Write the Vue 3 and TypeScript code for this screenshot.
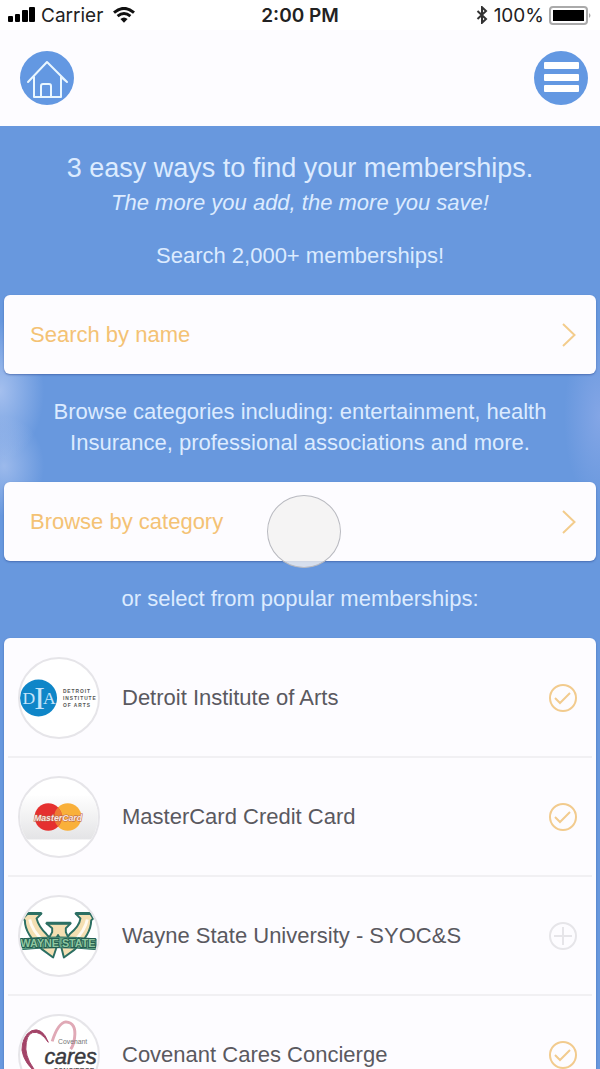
<script setup lang="ts">
import { ref } from 'vue'

type Logo = 'dia' | 'mastercard' | 'wayne' | 'covenant'

interface Membership {
  id: Logo
  name: string
  added: boolean
}

const memberships = ref<Membership[]>([
  { id: 'dia', name: 'Detroit Institute of Arts', added: true },
  { id: 'mastercard', name: 'MasterCard Credit Card', added: true },
  { id: 'wayne', name: 'Wayne State University - SYOC&S', added: false },
  { id: 'covenant', name: 'Covenant Cares Concierge', added: true },
])

function toggle(item: Membership): void {
  item.added = !item.added
}
</script>

<template>
  <div class="screen">
    <div class="status">
      <div class="status-side">
        <svg class="signal" viewBox="0 0 27 16" aria-hidden="true">
          <rect x="0" y="9" width="5" height="6" rx="1" />
          <rect x="7" y="7" width="5" height="8" rx="1" />
          <rect x="14" y="3" width="6" height="12" rx="1" />
          <rect x="21" y="0" width="6" height="15" rx="1" />
        </svg>
        <span class="carrier">Carrier</span>
        <svg class="wifi" viewBox="0 0 22 16" aria-hidden="true">
          <path d="M1 5.6Q11 -2.8 21 5.6" />
          <path d="M4.6 9.2Q11 3.8 17.4 9.2" />
          <path class="dot" d="M7.4 12Q11 9 14.6 12L11 15.8Z" />
        </svg>
      </div>
      <span class="time">2:00 PM</span>
      <div class="status-side end">
        <svg class="bluetooth" viewBox="0 0 12 18" aria-hidden="true">
          <path d="M1.5 5L10 13L6 16.8V1.2L10 5L1.5 13" />
        </svg>
        <span class="percent">100%</span>
        <svg class="battery" viewBox="0 0 43 19" aria-hidden="true">
          <rect class="shell" x="1" y="1" width="37" height="17" rx="3" />
          <rect x="4" y="4" width="31" height="11" />
          <path class="tip" d="M40 7Q43 9.5 40 12Z" />
        </svg>
      </div>
    </div>

    <header class="bar">
      <button class="round" type="button" aria-label="Home">
        <svg viewBox="0 0 54 54" aria-hidden="true">
          <path class="line" d="M8 31L27 11L47 31L41 26V46H14V26" />
          <path class="line" d="M21 46V35Q21 33 23 33H29Q31 33 31 35V46" />
        </svg>
      </button>
      <button class="round" type="button" aria-label="Menu">
        <svg viewBox="0 0 54 54" aria-hidden="true">
          <rect class="menu-line" x="10" y="11" width="35" height="7" rx="1" />
          <rect class="menu-line" x="10" y="23" width="35" height="7" rx="1" />
          <rect class="menu-line" x="10" y="34" width="35" height="7" rx="1" />
        </svg>
      </button>
    </header>

    <main class="content">
      <h1 class="title">3 easy ways to find your memberships.</h1>
      <p class="tagline">The more you add, the more you save!</p>
      <p class="note">Search 2,000+ memberships!</p>

      <a class="card link" href="#search">
        <span>Search by name</span>
        <svg class="chevron" viewBox="0 0 14 26" aria-hidden="true"><path d="M1 2L12.5 13L1 24" /></svg>
      </a>

      <p class="note">
        Browse categories including: entertainment, health<br />Insurance, professional associations and more.
      </p>

      <a class="card link" href="#browse">
        <span>Browse by category</span>
        <svg class="chevron" viewBox="0 0 14 26" aria-hidden="true"><path d="M1 2L12.5 13L1 24" /></svg>
        <span class="touch"></span>
      </a>

      <p class="note">or select from popular memberships:</p>

      <ul class="card list">
        <li v-for="item in memberships" :key="item.id" class="row">
          <span class="avatar">
            <svg v-if="item.id === 'dia'" viewBox="0 0 80 80" aria-hidden="true">
              <circle cx="19" cy="40" r="19" fill="#0f86c8" />
              <g fill="#c5e4fa" font-family="'Liberation Serif', serif" text-anchor="middle">
                <text x="9" y="46" font-size="18">D</text>
                <text x="20" y="51" font-size="33">I</text>
                <text x="30" y="46" font-size="18">A</text>
              </g>
              <g fill="#555" font-family="'Liberation Sans', sans-serif" font-weight="700" font-size="5" letter-spacing="1">
                <text x="44" y="35">DETROIT</text>
                <text x="44" y="42">INSTITUTE</text>
                <text x="44" y="49">OF ARTS</text>
              </g>
            </svg>
            <svg v-else-if="item.id === 'mastercard'" viewBox="0 0 80 80" aria-hidden="true">
              <defs>
                <linearGradient id="mc-shade" x1="0" y1="0" x2="0" y2="1">
                  <stop offset="0" stop-color="#fefefe" />
                  <stop offset="1" stop-color="#e4e4e6" />
                </linearGradient>
              </defs>
              <rect y="18" width="80" height="45" fill="url(#mc-shade)" />
              <circle cx="49" cy="40" r="14" fill="#f9b03a" />
              <circle cx="29" cy="40" r="14" fill="#e5302f" />
              <path d="M39 30.2A14 14 0 0 1 39 49.8A14 14 0 0 1 39 30.2Z" fill="#ee7b34" />
              <text x="39" y="44" text-anchor="middle" font-family="'Liberation Sans', sans-serif" font-size="9" font-weight="700" font-style="italic" fill="#fbe9e0" stroke="#b5604a" stroke-width="1" paint-order="stroke">MasterCard</text>
            </svg>
            <svg v-else-if="item.id === 'wayne'" viewBox="0 0 80 80" aria-hidden="true">
              <g fill="#f4dfb2" stroke="#2c6f63" stroke-width="2" stroke-linejoin="round">
                <path d="M8 17H22L17 22Q19 30 27 38L38 50L34 62L23 54Q5 38 5 24L3 22Z" />
                <path d="M72 17H57L62 22Q61 30 51 38L42 50L45 62L56 54Q73 38 73 24L75 22Z" />
                <path d="M27 27H52L47 32V36L52 47H43L39 39L35 47H27L33 36V32Z" />
              </g>
              <path d="M7 17H22M57 17H73M27 27H52" fill="none" stroke="#2c6f63" stroke-width="3" />
              <path d="M10 23Q12 34 24 45M69 23Q67 34 55 46" fill="none" stroke="#fffaf0" stroke-width="3" />
              <path d="M1 43Q40 39 78 43V54Q40 50 1 54Z" fill="#67a486" stroke="#2c6f63" />
              <text x="39" y="51" text-anchor="middle" font-family="'Liberation Sans', sans-serif" font-size="11" font-weight="700" fill="#8fc7a0" stroke="#245d50" stroke-width="2" paint-order="stroke">WAYNE STATE</text>
            </svg>
            <svg v-else viewBox="0 0 80 80" aria-hidden="true">
              <path d="M29 27Q23 11 12 15Q2 20 2 35Q4 49 19 60Q7 47 6 34Q6 19 13 17Q21 15 29 27Z" fill="#a34468" stroke="#a34468" />
              <path d="M33 26Q39 7 47 6Q58 7 56 22Q55 30 52 34" fill="none" stroke="#e0a9b6" stroke-width="3" />
              <text x="39" y="29" font-family="'Liberation Sans Narrow', 'Liberation Sans', sans-serif" font-size="7" fill="#777">Covenant</text>
              <text x="25" y="49" font-family="'Liberation Sans', sans-serif" font-size="22" font-style="italic" font-weight="400" fill="#3a3a3e" stroke="#3a3a3e" stroke-width="0.5">cares</text>
              <text x="34" y="58" font-family="'Liberation Sans', sans-serif" font-size="7" font-weight="700" fill="#555">CONCIERGE</text>
            </svg>
          </span>
          <span class="name">{{ item.name }}</span>
          <button
            class="toggle"
            :class="{ added: item.added }"
            type="button"
            :aria-pressed="item.added"
            :aria-label="(item.added ? 'Remove ' : 'Add ') + item.name"
            @click="toggle(item)"
          >
            <svg viewBox="0 0 30 30" aria-hidden="true">
              <circle cx="15" cy="15" r="13" />
              <path v-if="item.added" d="M7 15L12 20L22 10" />
              <path v-else d="M15 6V24M6 15H24" />
            </svg>
          </button>
        </li>
      </ul>
    </main>
  </div>
</template>

<style>
html,
body {
  margin: 0;
  background: #6898de;
}
</style>

<style scoped>
.screen {
  display: flex;
  flex-direction: column;
  height: 100vh;
  overflow: hidden;
  background: #fdfcff;
  font-family: 'Helvetica Neue', 'Liberation Sans', Arial, sans-serif;
  font-weight: 300;
}

.status {
  display: grid;
  grid-template-columns: 1fr auto 1fr;
  align-items: center;
  height: 30px;
  padding: 0 8px;
  background: #fff;
  color: #222;
  font-family: Inter, 'Liberation Sans', sans-serif;
  font-size: 19px;
  font-weight: 400;
}

.status-side {
  display: flex;
  align-items: center;
}

.end {
  justify-content: flex-end;
}

.signal {
  width: 27px;
  height: 16px;
}

.carrier {
  margin: 0 10px 0 6px;
}

.wifi {
  width: 22px;
  height: 16px;
  fill: none;
  stroke: #111;
  stroke-width: 3;
}

.wifi .dot {
  fill: #111;
  stroke: none;
}

.time {
  font-weight: 600;
}

.bluetooth {
  width: 12px;
  height: 18px;
  fill: none;
  stroke: #333;
  stroke-width: 2;
}

.percent {
  margin: 0 5px 0 6px;
}

.battery {
  width: 43px;
  height: 19px;
}

.battery .shell {
  fill: #fff;
  stroke: #aaa;
  stroke-width: 2;
}

.battery .tip {
  fill: #aaa;
}

.bar {
  display: flex;
  align-items: center;
  justify-content: space-between;
  height: 96px;
  padding: 0 12px 0 20px;
}

.round {
  width: 54px;
  height: 54px;
  padding: 0;
  border: 0;
  border-radius: 50%;
  background: #6398e2;
}

.round svg {
  display: block;
}

.line {
  fill: none;
  stroke: #eaf7ff;
  stroke-width: 2;
  stroke-linecap: round;
  stroke-linejoin: round;
}

.menu-line {
  fill: #fff;
}

.content {
  flex: 1;
  min-height: 0;
  overflow: hidden;
  padding: 23px 4px 0;
  background:
    radial-gradient(ellipse 44px 70px at 0 265px, rgba(190, 208, 245, 0.7), transparent),
    radial-gradient(ellipse 40px 50px at 4px 340px, rgba(190, 208, 245, 0.6), transparent),
    radial-gradient(ellipse 36px 90px at 100% 290px, rgba(150, 175, 235, 0.6), transparent),
    #6898de;
  color: #dcebff;
  text-align: center;
}

.title {
  margin: 0;
  font-size: 27px;
  font-weight: 300;
  line-height: 38px;
}

.tagline {
  margin: 0;
  font-size: 22px;
  font-style: italic;
  line-height: 31px;
}

.note {
  margin: 0;
  padding: 22px 0 24px;
  font-size: 22px;
  line-height: 31px;
}

.card {
  border-radius: 6px;
  background: #fdfcff;
  box-shadow: 0 1px 2px rgba(50, 80, 150, 0.6);
}

.link {
  position: relative;
  display: flex;
  align-items: center;
  justify-content: space-between;
  height: 79px;
  padding: 0 20px 0 26px;
  color: #f4c274;
  font-size: 22px;
  text-decoration: none;
}

.chevron {
  width: 14px;
  height: 26px;
  fill: none;
  stroke: #f3cc8c;
  stroke-width: 2;
}

.touch {
  position: absolute;
  top: 13px;
  left: calc(50% - 33px);
  box-sizing: border-box;
  width: 74px;
  height: 73px;
  border: 1px solid #b9bac0;
  border-radius: 50%;
  background: rgba(242, 241, 241, 0.8);
}

.list {
  margin: 0;
  padding: 1px 0 0;
  list-style: none;
  text-align: left;
}

.row {
  display: flex;
  align-items: center;
  box-sizing: border-box;
  height: 119px;
  margin: 0 4px;
  padding: 0 14px 0 10px;
  border-bottom: 2px solid #f1f0f3;
}

.avatar {
  flex: none;
  box-sizing: border-box;
  width: 82px;
  height: 82px;
  overflow: hidden;
  border: 2px solid #e6e5e9;
  border-radius: 50%;
  background: #fff;
}

.avatar svg {
  display: block;
}

.name {
  flex: 1;
  padding-left: 22px;
  color: #5a595f;
  font-size: 22px;
}

.toggle {
  width: 30px;
  height: 30px;
  padding: 0;
  border: 0;
  background: none;
}

.toggle svg {
  display: block;
  fill: none;
  stroke: #e6e5e9;
  stroke-width: 2;
}

.toggle.added svg {
  stroke: #f2cb8e;
}
</style>
